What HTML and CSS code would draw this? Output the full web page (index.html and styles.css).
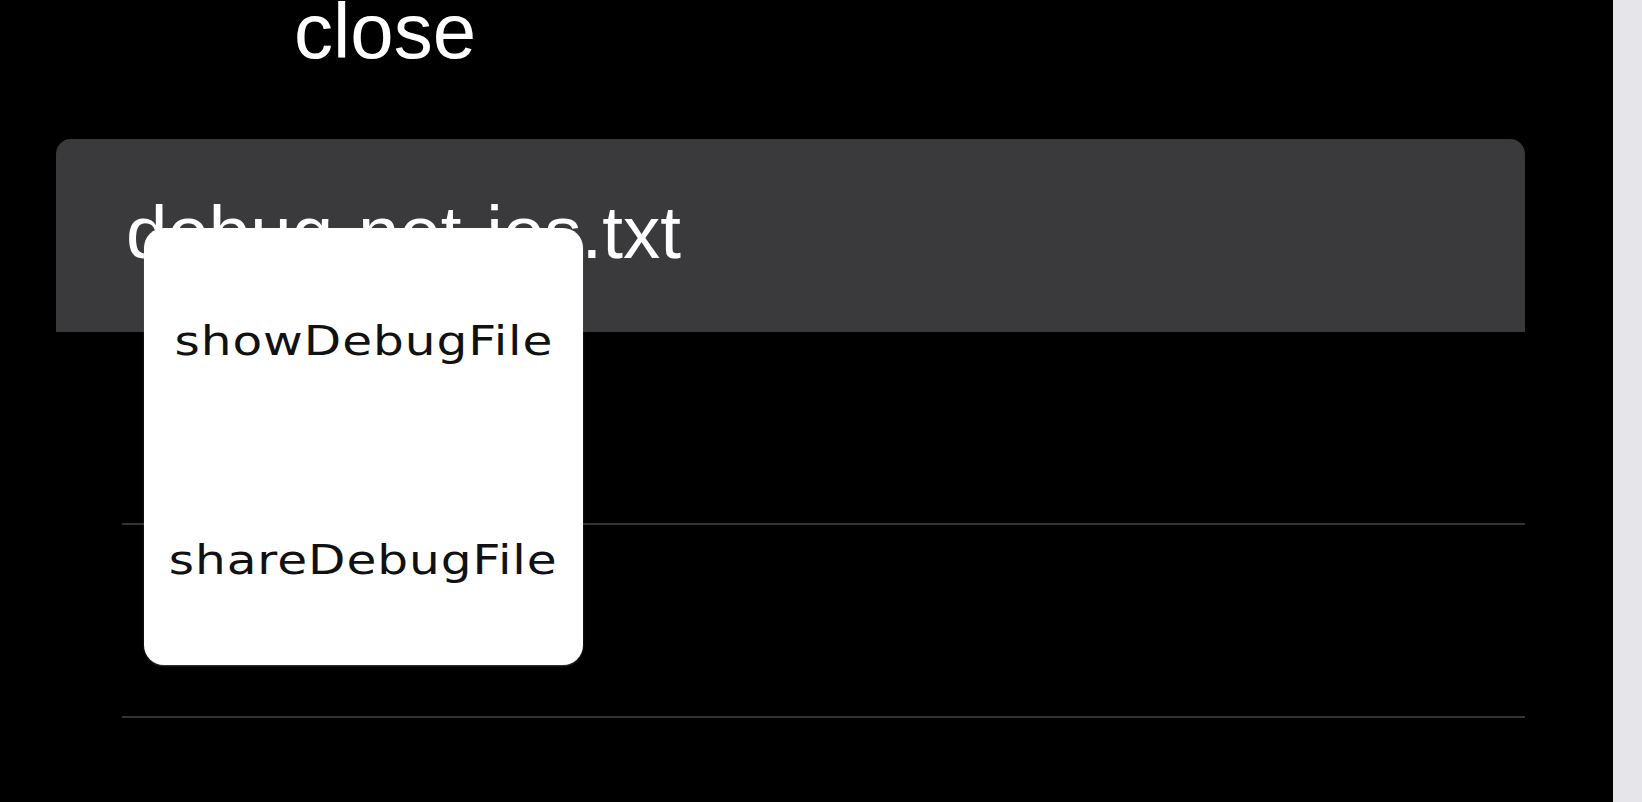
FILE: index.html
```html
<!DOCTYPE html>
<html lang="en">
<head>
<meta charset="utf-8">
<title>Debug files</title>
<link rel="stylesheet" href="styles.css">
</head>
<body>
<div class="screen">
  <main class="main">
    <div class="header"><span class="close">close</span></div>
    <div class="card"><span class="filename">debug-net-ios.txt</span></div>
    <div class="list">
      <div class="row"></div>
      <div class="row"></div>
    </div>
    <div class="menu">
      <div class="menu-item"><span class="menu-label">showDebugFile</span></div>
      <div class="menu-item"><span class="menu-label">shareDebugFile</span></div>
    </div>
  </main>
  <aside class="side"></aside>
</div>
</body>
</html>
```

FILE: styles.css
```css
html, body {
  margin: 0;
  padding: 0;
  height: 100%;
  background: #000;
}

.screen {
  display: flex;
  width: 1642px;
  height: 802px;
  overflow: hidden;
}

.main {
  position: relative;
  width: 1613px;
  flex: 0 0 1613px;
  background: #000;
  font-family: "Liberation Sans", Arial, sans-serif;
  color: #fff;
}

.side {
  flex: 1;
  background: #e5e5ea;
}

.header {
  height: 139px;
  padding-left: 294px;
  box-sizing: border-box;
  font-size: 78px;
  line-height: 62px;
}

.card {
  margin: 0 88px 0 56px;
  height: 193px;
  box-sizing: border-box;
  padding: 57px 70px 0;
  background: #3a3a3c;
  border-radius: 15px 15px 0 0;
  font-size: 74.5px;
  line-height: 74px;
  white-space: nowrap;
}

.list {
  margin: 0 88px 0 122px;
}

.row {
  height: 191px;
  border-bottom: 2px solid #333335;
}

.menu {
  position: absolute;
  left: 144px;
  top: 228px;
  width: 439px;
  height: 437px;
  background: #fff;
  border-radius: 20px;
  box-shadow: 0 1px 2px rgba(120, 120, 120, 0.5);
  display: flex;
  flex-direction: column;
  font-family: "DejaVu Sans", sans-serif;
  color: #111;
}

.menu-item {
  height: 218.5px;
  box-sizing: border-box;
  padding-top: 93px;
  text-align: center;
  font-size: 41px;
  line-height: 41px;
  white-space: nowrap;
}

.menu-label {
  display: inline-block;
  letter-spacing: 0.8px;
  transform: scaleX(1.185);
}
```
